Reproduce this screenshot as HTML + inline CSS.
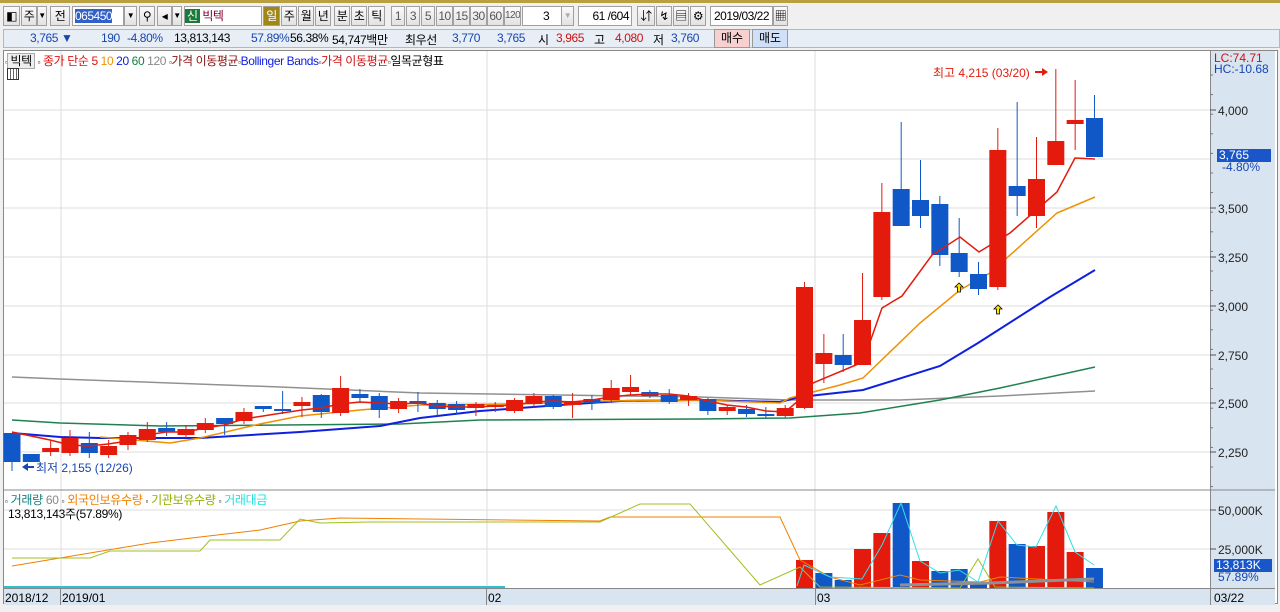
<!DOCTYPE html>
<html><head><meta charset="utf-8"><style>
*{margin:0;padding:0;box-sizing:border-box}
body{width:1280px;height:612px;overflow:hidden;background:#f0f0f0;font-family:"Liberation Sans","Noto Sans CJK KR","NanumGothic",sans-serif;font-size:12px;position:relative}
.a{position:absolute;white-space:nowrap}
.r2{font-size:12px;letter-spacing:-0.4px}
.b{position:absolute;border:1px solid #a0a0a0;background:#fff;height:20px;top:6px;text-align:center;line-height:18px;font-size:12px;letter-spacing:-0.5px;overflow:hidden}
.g{background:linear-gradient(#fafafa,#e2e2e2)}
</style></head><body>
<div class="a" style="left:0;top:0;width:1280px;height:3px;background:#b8a040"></div>
<div class="b g" style="left:3px;width:17px">◧</div>
<div class="b g" style="left:21px;width:16px">주</div>
<div class="b g" style="left:37px;width:10px;font-size:8px">▼</div>
<div class="b g" style="left:50px;width:20px">전</div>
<div class="b" style="left:72px;width:52px;text-align:left;padding-left:2px"><span style="background:#3060c8;color:#fff">065450</span></div>
<div class="b g" style="left:124px;width:13px;font-size:8px">▼</div>
<div class="b g" style="left:139px;width:16px">⚲</div>
<div class="b g" style="left:157px;width:15px">◂</div>
<div class="b g" style="left:172px;width:10px;font-size:8px">▼</div>
<div class="b" style="left:184px;width:78px;text-align:left"><span style="background:#1a7a3a;color:#fff;padding:0 2px">신</span><span style="color:#800030"> 빅텍</span></div>
<div class="b" style="left:263px;width:17px;background:#a08818;color:#fff">일</div>
<div class="b g" style="left:281px;width:16px">주</div>
<div class="b g" style="left:298px;width:16px">월</div>
<div class="b g" style="left:315px;width:16px">년</div>
<div class="b g" style="left:334px;width:16px">분</div>
<div class="b g" style="left:351px;width:16px">초</div>
<div class="b g" style="left:368px;width:17px">틱</div>
<div class="b g" style="left:391px;width:14px;color:#555">1</div>
<div class="b g" style="left:406px;width:14px;color:#555">3</div>
<div class="b g" style="left:421px;width:14px;color:#555">5</div>
<div class="b g" style="left:436px;width:17px;color:#555">10</div>
<div class="b g" style="left:453px;width:17px;color:#555">15</div>
<div class="b g" style="left:470px;width:17px;color:#555">30</div>
<div class="b g" style="left:487px;width:17px;color:#555">60</div>
<div class="b g" style="left:504px;width:17px;color:#555;font-size:10px">120</div>
<div class="b" style="left:522px;width:40px;text-align:left;padding-left:20px">3</div>
<div class="b g" style="left:561px;width:13px;font-size:8px;color:#aaa">▼</div>
<div class="b" style="left:578px;width:54px;text-align:right;padding-right:2px">61 /604</div>
<div class="b g" style="left:637px;width:18px">⇵</div>
<div class="b g" style="left:656px;width:16px">↯</div>
<div class="b g" style="left:673px;width:16px">▤</div>
<div class="b g" style="left:690px;width:16px">⚙</div>
<div class="b" style="left:710px;width:63px">2019/03/22</div>
<div class="b g" style="left:773px;width:15px">▦</div>

<div class="a" style="left:3px;top:29px;width:1277px;height:19px;background:#e8eef6;border:1px solid #b0b8c8"></div>
<div class="a r2" style="top:31px;left:30px;color:#1846b0">3,765 ▼</div>
<div class="a r2" style="top:31px;left:101px;color:#1846b0">190</div>
<div class="a r2" style="top:31px;left:127px;color:#1846b0">-4.80%</div>
<div class="a r2" style="top:31px;left:174px">13,813,143</div>
<div class="a r2" style="top:31px;left:251px;color:#1846b0">57.89%</div>
<div class="a r2" style="top:31px;left:290px">56.38%</div>
<div class="a r2" style="top:31px;left:332px">54,747백만</div>
<div class="a r2" style="top:31px;left:405px">최우선</div>
<div class="a r2" style="top:31px;left:452px;color:#1846b0">3,770</div>
<div class="a r2" style="top:31px;left:497px;color:#1846b0">3,765</div>
<div class="a r2" style="top:31px;left:538px">시</div>
<div class="a r2" style="top:31px;left:556px;color:#d01010">3,965</div>
<div class="a r2" style="top:31px;left:594px">고</div>
<div class="a r2" style="top:31px;left:615px;color:#d01010">4,080</div>
<div class="a r2" style="top:31px;left:653px">저</div>
<div class="a r2" style="top:31px;left:671px;color:#1846b0">3,760</div>
<div class="a" style="left:714px;top:29px;width:36px;height:19px;background:#f8d0d0;border:1px solid #999;text-align:center;line-height:17px">매수</div>
<div class="a" style="left:752px;top:29px;width:36px;height:19px;background:#d0e0f8;border:1px solid #999;text-align:center;line-height:17px">매도</div>

<div class="a" style="left:3px;top:50px;width:1275px;height:554px;background:#fff;border:1px solid #888"></div>
<div class="a" style="left:1210px;top:51px;width:65px;height:537px;background:#d8e4f0;border-left:1px solid #888"></div>
<div class="a" style="left:4px;top:588px;width:1271px;height:17px;background:#d8e4f0;border-top:1px solid #888"></div>
<div class="a" style="left:1210px;top:588px;width:1px;height:17px;background:#888"></div>
<div class="a" style="left:60px;top:588px;width:1px;height:17px;background:#888"></div>
<div class="a" style="left:486px;top:588px;width:1px;height:17px;background:#888"></div>
<div class="a" style="left:815px;top:588px;width:1px;height:17px;background:#888"></div>

<svg class="a" style="left:0;top:0" width="1280" height="612" id="s" font-family="Liberation Sans, Noto Sans CJK KR, sans-serif" font-size="12"></svg>

<div class="a" style="left:5px;top:52px;font-size:12px;letter-spacing:-0.4px"><span style="font-size:8px">▫</span><span style="background:#eee;border:1px solid #aaa;padding:0 2px">빅텍</span> <span style="font-size:8px">▫</span> <span style="color:#e01010">종가 단순 5</span> <span style="color:#f09000">10</span> <span style="color:#1020e0">20</span> <span style="color:#108040">60</span> <span style="color:#888">120</span> <span style="font-size:8px">▫</span><span style="color:#8a1010">가격 이동평균</span><span style="font-size:8px">▫</span><span style="color:#1020e0">Bollinger Bands</span><span style="font-size:8px">▫</span><span style="color:#d01010">가격 이동평균</span><span style="font-size:8px">▫</span>일목균형표</div>
<div class="a" style="left:7px;top:68px;width:12px;height:12px;border:1px solid #333;background:repeating-linear-gradient(90deg,#fff 0 2px,#666 2px 3px)"></div>
<div class="a" style="left:5px;top:491px;letter-spacing:-0.3px"><span style="font-size:8px">▫</span> <span style="color:#108080">거래량</span> <span style="color:#888">60</span> <span style="font-size:8px">▫</span> <span style="color:#f08000">외국인보유수량</span> <span style="font-size:8px">▫</span> <span style="color:#90b000">기관보유수량</span> <span style="font-size:8px">▫</span> <span style="color:#20e0e0">거래대금</span></div>
<div class="a" style="left:8px;top:505px;letter-spacing:-0.3px">13,813,143주(57.89%)</div>
<div class="a" style="left:5px;top:591px">2018/12</div>
<div class="a" style="left:62px;top:591px">2019/01</div>
<div class="a" style="left:488px;top:591px">02</div>
<div class="a" style="left:817px;top:591px">03</div>
<div class="a" style="left:1214px;top:591px">03/22</div>
<div class="a" style="left:1214px;top:52px;color:#d01010;line-height:12px">LC:74.71</div>
<div class="a" style="left:1214px;top:63px;color:#1846b0;line-height:12px">HC:-10.68</div>
<div class="a" style="left:1217px;top:149px;width:54px;height:13px;background:#1a56c8;color:#fff;line-height:13px;padding-left:2px">3,765</div>
<div class="a" style="left:1222px;top:161px;color:#1846b0;line-height:12px">-4.80%</div>
<div class="a" style="left:1214px;top:559px;width:58px;height:13px;background:#1a56c8;color:#fff;line-height:13px;padding-left:2px">13,813K</div>
<div class="a" style="left:1218px;top:571px;color:#1846b0;line-height:12px">57.89%</div>

<script>
var s=document.getElementById('s'),h='';
function L(x1,y1,x2,y2,c,w){h+='<line x1="'+x1+'" y1="'+y1+'" x2="'+x2+'" y2="'+y2+'" stroke="'+c+'" stroke-width="'+(w||1)+'"/>';}
function P(p,c,w){h+='<polyline fill="none" stroke="'+c+'" stroke-width="'+w+'" points="'+p.map(function(a){return a.join(',')}).join(' ')+'"/>';}
function T(x,y,t,c){h+='<text x="'+x+'" y="'+y+'" fill="'+(c||'#222')+'">'+t+'</text>';}
[110,159,208,257,306,355,403,452].forEach(function(y){L(4,y,1210,y,'#ddd');});
[510,549].forEach(function(y){L(4,y,1210,y,'#ddd');});
[61,487,815].forEach(function(x){L(x,51,x,588,'#ddd');});
L(4,490,1210,490,'#888');L(1210,490,1275,490,'#888');
var lab=[[110,'4,000'],[208,'3,500'],[257,'3,250'],[306,'3,000'],[355,'2,750'],[403,'2,500'],[452,'2,250']];
lab.forEach(function(a){L(1210,a[0],1216,a[0],'#555');T(1218,a[0]+5,a[1]);});
for(var y=75;y<488;y+=19.6){L(1210,y,1213,y,'#777');}
[[510,'50,000K'],[549,'25,000K']].forEach(function(a){L(1210,a[0],1216,a[0],'#555');T(1218,a[0]+5,a[1]);});
var R='#e41a0c',B='#1058c8';
var c=[[433,462,433,471,B],[454,462,454,462,B],[448,452,441,456,R],[438,453,430,456,R],[443,453,432,458,B],[446,455,440,458,R],[435,445,432,450,R],[429,440,422,442,R],[428,432,422,436,B],[429,435,425,438,R],[423,430,418,433,R],[418,424,418,435,B],[412,421,408,424,R],[406,409,406,412,B],[409,411,391,414,B],[402,406,397,417,R],[395,412,394,418,B],[388,413,376,416,R],[394,398,389,402,B],[396,410,393,418,B],[401,409,398,413,R],[401,404,392,412,B],[403,409,400,416,B],[404,410,401,414,B],[404,408,402,416,R],[405,407,402,412,R],[400,411,398,413,R],[396,404,393,408,R],[396,407,395,409,B],[401,405,393,418,R],[399,403,395,410,B],[388,400,380,403,R],[387,392,375,395,R],[392,396,390,398,B],[395,402,389,404,B],[396,400,393,406,R],[399,411,398,415,B],[407,411,405,415,R],[409,414,405,417,B],[414,416,407,418,B],[408,416,405,418,R],[287,408,282,409,R],[353,364,334,383,R],[355,365,334,372,B],[320,365,273,365,R],[212,297,183,300,R],[189,226,122,226,B],[200,216,160,228,B],[204,255,196,266,B],[253,272,218,277,B],[274,289,262,295,B],[150,287,128,290,R],[186,196,102,216,B],[179,216,137,228,R],[141,165,69,165,R],[120,124,80,150,R],[118,157,95,157,B]];
var vol={41:[560,R],42:[573,B],43:[580,B],44:[549,R],45:[533,R],46:[503,B],47:[561,R],48:[571,B],49:[569,B],50:[582,B],51:[521,R],52:[544,B],53:[546,R],54:[512,R],55:[552,R],56:[568,B]};
P([[12,377],[60,379],[280,387],[420,393],[700,397],[790,400],[900,400],[1000,396],[1095,391]],'#909090',1.5);
P([[12,420],[60,423],[160,426],[400,424],[480,420],[700,419],[790,418],[860,413],[940,400],[1000,388],[1095,367]],'#208050',1.5);
P([[12,433],[60,437],[100,438],[200,438],[300,432],[380,426],[420,418],[480,411],[560,405],[620,401],[700,400],[780,402],[800,397],[863,390],[940,366],[978,343],[1050,297],[1095,270]],'#1020e0',2);
P([[100,437],[170,443],[200,438],[260,424],[300,416],[360,410],[420,405],[520,404],[600,401],[700,400],[780,403],[790,398],[840,385],[863,378],[920,323],[960,290],[990,273],[1057,213],[1095,197]],'#f09000',1.5);
for(var i=0;i<c.length;i++){var x=12+19.33*i,d=c[i];
L(x,d[2],x,d[3],d[4]);
h+='<rect x="'+(x-8.5)+'" y="'+d[0]+'" width="17" height="'+Math.max(2,d[1]-d[0])+'" fill="'+d[4]+'"/>';
if(vol[i]){h+='<rect x="'+(x-8.5)+'" y="'+vol[i][0]+'" width="17" height="'+(588-vol[i][0])+'" fill="'+vol[i][1]+'"/>';}}
P([[12,432],[50,440],[70,445],[89,446],[108,444],[128,441],[147,435],[166,432],[186,432],[205,428],[224,425],[244,419],[263,416],[282,413],[302,410],[321,408],[340,404],[360,402],[379,403],[398,404],[418,403],[437,406],[456,407],[476,407],[495,406],[514,405],[534,402],[553,401],[572,402],[592,400],[611,397],[630,395],[650,394],[669,394],[688,396],[708,401],[727,405],[746,407],[766,411],[785,412],[804,396],[813,383],[863,362],[882,308],[902,296],[932,255],[960,237],[979,252],[1010,233],[1057,192],[1075,158],[1095,159]],'#e41a0c',1.5);
T(933,77,'최고 4,215 (03/20)','#e41a0c');L(1035,72,1046,72,'#e41a0c',2);h+='<path d="M1042,68 L1048,72 L1042,76Z" fill="#e41a0c"/>';
T(36,472,'최저 2,155 (12/26)','#1846b0');L(24,467,34,467,'#1846b0',2);h+='<path d="M28,463 L22,467 L28,471Z" fill="#1846b0"/>';
[[959,289],[998,311]].forEach(function(a){h+='<path d="M'+a[0]+','+(a[1]-6)+' l-4,4 h2.5 v5 h3 v-5 h2.5z" fill="#ffe800" stroke="#000" stroke-width="0.8"/>';});
P([[12,566],[90,553],[150,543],[200,537],[260,530],[300,521],[340,518],[600,521],[610,517],[780,517],[800,560],[830,577],[860,585],[900,575],[920,580],[980,582],[1000,577],[1094,582]],'#f08000',1);
P([[12,558],[90,558],[110,551],[200,551],[210,540],[280,540],[300,519],[320,523],[370,522],[600,522],[640,504],[690,504],[760,585],[800,567],[820,587],[960,588],[978,559],[995,587],[1094,588]],'#a0c020',1);
P([[797,586],[804,565],[830,577],[862,579],[882,545],[901,503],[920,561],[940,573],[959,570],[978,582],[998,521],[1017,545],[1036,547],[1056,506],[1075,552],[1094,565]],'#30e0e8',1);
P([[900,585],[990,583],[1094,579]],'#909090',3);
L(4,587,505,587,'#30c0d0',2);
s.innerHTML=h;
</script>
</body></html>
